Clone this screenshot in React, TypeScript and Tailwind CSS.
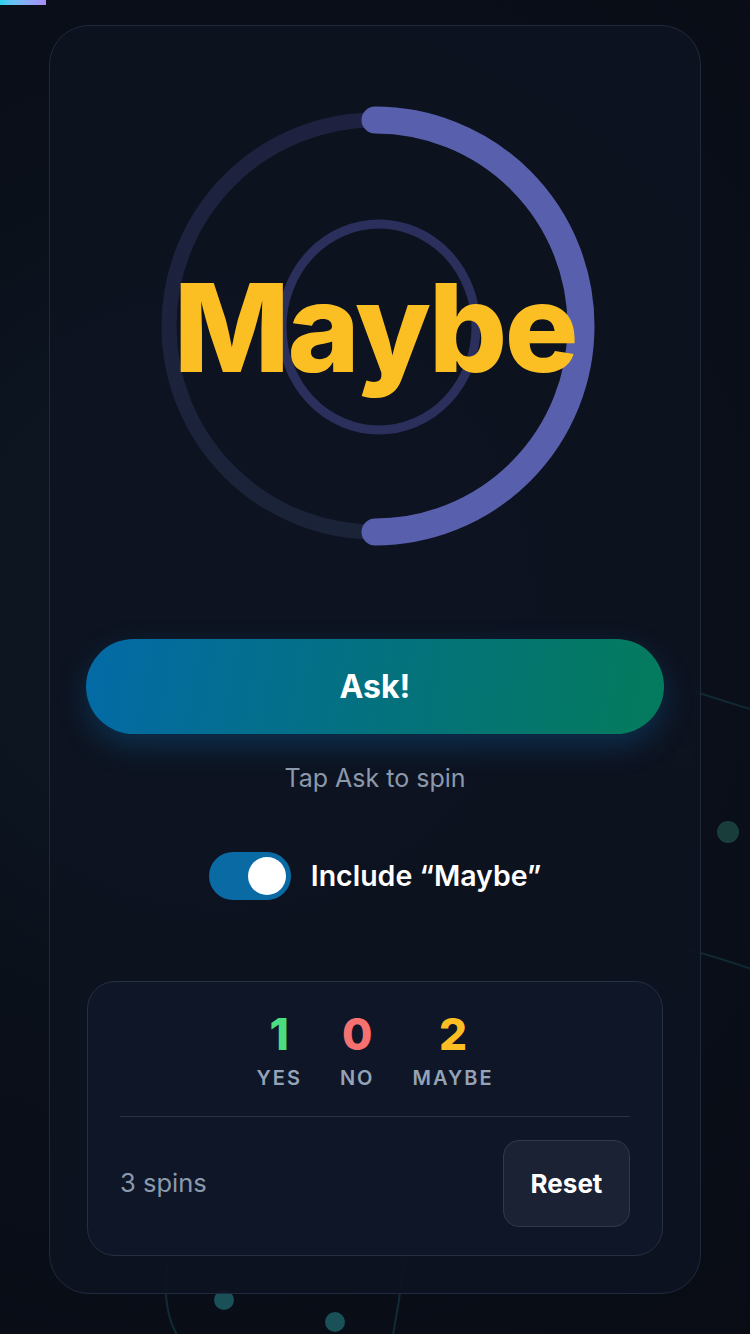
import React, { useState } from 'react';

const RING = 440;
const C = RING / 2;
const R = 206;

const Spinner: React.FC<{ answer: string }> = ({ answer }) => {
  // half-circle arc from 12 o'clock to 6 o'clock
  const arc = `M ${C} ${C - R} A ${R} ${R} 0 0 1 ${C} ${C + R}`;
  return (
    <div className="relative w-[440px] h-[440px] mx-auto flex items-center justify-center">
      <svg className="absolute inset-0" width={RING} height={RING} viewBox={`0 0 ${RING} ${RING}`}>
        <defs>
          <linearGradient id="track" x1="0" y1="0" x2="0" y2="1">
            <stop offset="0%" stopColor="#1e2240" />
            <stop offset="100%" stopColor="#1a2338" />
          </linearGradient>
        </defs>
        <circle cx={C} cy={C} r={R} fill="none" stroke="url(#track)" strokeWidth={15} />
        <path d={arc} fill="none" stroke="#5860ad" strokeWidth={27} strokeLinecap="round" />
        <ellipse cx={C + 4} cy={C + 1} rx={97} ry={103} fill="none" stroke="#2b2f5c" strokeWidth={9} />
      </svg>
      <span className="relative text-[123px] leading-none font-extrabold tracking-[-0.02em] text-[#fbbf24] mt-[2px]">
        {answer}
      </span>
    </div>
  );
};

const Stat: React.FC<{ value: number; label: string; color: string }> = ({ value, label, color }) => (
  <div className="flex flex-col items-center">
    <span className={`text-[44px] leading-none font-extrabold ${color}`}>{value}</span>
    <span className="mt-2 text-[20px] leading-[28px] font-semibold tracking-[0.1em] text-[#94a3b8]">{label}</span>
  </div>
);

const Backdrop: React.FC = () => (
  <svg className="absolute inset-0 pointer-events-none" width="750" height="1334" viewBox="0 0 750 1334">
    <path d="M 690 690 Q 720 700 760 712" stroke="#1b4a52" strokeWidth="2" fill="none" opacity="0.45" />
    <path d="M 690 950 Q 720 958 760 972" stroke="#1b4a52" strokeWidth="2" fill="none" opacity="0.45" />
    <circle cx="728" cy="832" r="11" fill="#1d4a44" opacity="0.8" />
    <circle cx="684" cy="757" r="10" fill="#16302f" opacity="0.5" />
    <path d="M 168 1260 Q 160 1310 180 1340" stroke="#1a4a55" strokeWidth="2" fill="none" opacity="0.5" />
    <path d="M 404 1260 Q 400 1300 392 1340" stroke="#1a4a55" strokeWidth="2" fill="none" opacity="0.5" />
    <circle cx="224" cy="1300" r="10" fill="#1a5058" />
    <circle cx="335" cy="1322" r="10" fill="#1a5058" />
  </svg>
);

export default function App() {
  const [includeMaybe, setIncludeMaybe] = useState(true);
  const counts = { yes: 1, no: 0, maybe: 2 };
  const total = counts.yes + counts.no + counts.maybe;

  return (
    <div
      className="relative min-h-screen overflow-hidden bg-[#0a0e17] bg-[radial-gradient(circle_at_30%_45%,#0e1a26_0%,#0a0f19_55%,#090c15_100%)] pt-[25px] pb-[40px]"
      style={{ fontFamily: 'Inter, "Noto Sans", sans-serif' }}
    >
      <Backdrop />
      {/* progress bar */}
      <div className="absolute left-0 top-0 h-[5px] w-[46px] bg-gradient-to-r from-[#22d3ee] to-[#a78bfa]" />

      <div className="relative mx-auto w-[652px] rounded-[40px] border border-[#1f2a3c] bg-[#0d1320]/90 px-[36px] pt-[80px] pb-[37px]">
        <Spinner answer="Maybe" />

        <button className="mt-[93px] w-full h-[95px] rounded-full bg-[linear-gradient(100deg,#036aa6_0%,#04717f_50%,#047b5c_100%)] text-white text-[32px] font-bold shadow-[0_12px_30px_rgba(14,116,184,0.3)]">
          Ask!
        </button>

        <p className="mt-[28px] text-center text-[25px] leading-[32px] text-[#8b99ad]">Tap Ask to spin</p>

        <div className="mt-[58px] flex items-center justify-center gap-5">
          <button
            onClick={() => setIncludeMaybe(!includeMaybe)}
            className={`w-[82px] h-[48px] rounded-full p-[5px] flex items-center ${includeMaybe ? 'bg-[#0a6aa4] justify-end' : 'bg-[#334155] justify-start'}`}
          >
            <span className="block w-[38px] h-[38px] rounded-full bg-white" />
          </button>
          <span className="text-[28.5px] font-semibold text-white">Include “Maybe”</span>
        </div>

        <div className="mt-[81px] mx-[1px] rounded-[28px] border border-[#253044] bg-[#0f1627] px-[32px] pt-[30px] pb-[28px]">
          <div className="flex justify-center gap-[38px]">
            <Stat value={counts.yes} label="YES" color="text-[#4ade80]" />
            <Stat value={counts.no} label="NO" color="text-[#f87171]" />
            <Stat value={counts.maybe} label="MAYBE" color="text-[#fbbf24]" />
          </div>

          <div className="mt-[24px] h-px bg-[#263245]" />

          <div className="mt-[23px] flex items-center justify-between">
            <span className="text-[25.5px] text-[#8b99ad]">{total} spins</span>
            <button className="w-[127px] h-[87px] rounded-[16px] border border-[#2e3a50] bg-[#1a2234] text-white text-[26px] font-bold">
              Reset
            </button>
          </div>
        </div>
      </div>
    </div>
  );
}
